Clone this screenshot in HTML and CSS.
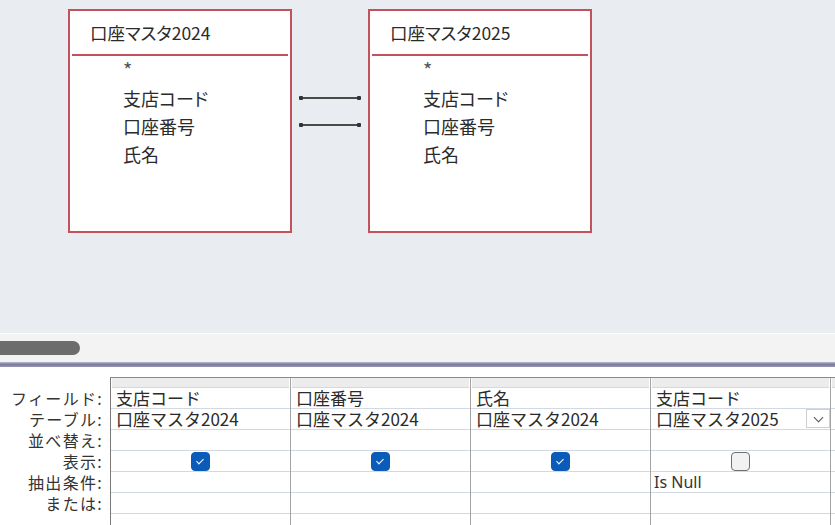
FILE: index.html
```html
<!DOCTYPE html>
<html lang="ja">
<head>
    <meta charset="UTF-8">
    <title>クエリデザイン</title>
    <link rel="stylesheet" href="styles.css">
</head>
<body>
    <div class="canvas">
        <div class="tbl">
            <div class="tbl-title">口座マスタ2024</div>
            <ul class="fields">
                <li class="star">*</li>
                <li>支店コード</li>
                <li>口座番号</li>
                <li>氏名</li>
            </ul>
        </div>
        <div class="links">
            <div class="link"></div>
            <div class="link"></div>
        </div>
        <div class="tbl">
            <div class="tbl-title">口座マスタ2025</div>
            <ul class="fields">
                <li class="star">*</li>
                <li>支店コード</li>
                <li>口座番号</li>
                <li>氏名</li>
            </ul>
        </div>
    </div>

    <div class="hscroll"><div class="thumb"></div></div>
    <div class="splitter"></div>

    <div class="qbe">
        <div class="labels">
            <div class="label">フィールド:</div>
            <div class="label">テーブル:</div>
            <div class="label">並べ替え:</div>
            <div class="label">表示:</div>
            <div class="label">抽出条件:</div>
            <div class="label">または:</div>
        </div>
        <div class="grid">
            <div class="qcol">
                <div class="qhead"></div>
                <div class="cell">支店コード</div>
                <div class="cell">口座マスタ2024</div>
                <div class="cell"></div>
                <div class="cell center"><span class="check on"></span></div>
                <div class="cell"></div>
                <div class="cell"></div>
                <div class="cell"></div>
            </div>
            <div class="qcol">
                <div class="qhead"></div>
                <div class="cell">口座番号</div>
                <div class="cell">口座マスタ2024</div>
                <div class="cell"></div>
                <div class="cell center"><span class="check on"></span></div>
                <div class="cell"></div>
                <div class="cell"></div>
                <div class="cell"></div>
            </div>
            <div class="qcol">
                <div class="qhead"></div>
                <div class="cell">氏名</div>
                <div class="cell">口座マスタ2024</div>
                <div class="cell"></div>
                <div class="cell center"><span class="check on"></span></div>
                <div class="cell"></div>
                <div class="cell"></div>
                <div class="cell"></div>
            </div>
            <div class="qcol">
                <div class="qhead"></div>
                <div class="cell">支店コード</div>
                <div class="cell combo">口座マスタ2025<span class="drop"></span></div>
                <div class="cell"></div>
                <div class="cell center"><span class="check"></span></div>
                <div class="cell latin">Is Null</div>
                <div class="cell"></div>
                <div class="cell"></div>
            </div>
            <div class="qcol">
                <div class="qhead"></div>
                <div class="cell"></div>
                <div class="cell"></div>
                <div class="cell"></div>
                <div class="cell"></div>
                <div class="cell"></div>
                <div class="cell"></div>
                <div class="cell"></div>
            </div>
        </div>
    </div>
</body>
</html>
```

FILE: styles.css
```css
body {
    margin: 0;
    width: 835px;
    height: 525px;
    overflow: hidden;
    background: #fff;
    color: #2b2b2b;
    font-family: "Noto Sans CJK JP", "Noto Sans", sans-serif;
}

/* table diagram area */
.canvas {
    display: flex;
    align-items: flex-start;
    height: 333px;
    box-sizing: border-box;
    padding: 9px 0 0 68px;
    background: #e9ecf0;
}

.tbl {
    width: 224px;
    height: 224px;
    box-sizing: border-box;
    border: 2px solid #c3525d;
    background: #fff;
}

.tbl-title {
    height: 43px;
    line-height: 43px;
    margin: 0 2px;
    padding-left: 18px;
    font-size: 17.5px;
    font-feature-settings: "palt";
    border-bottom: 2px solid #c3525d;
}

.fields {
    list-style: none;
    margin: 0;
    padding: 0 0 0 53px;
    font-size: 18px;
    line-height: 28px;
    font-feature-settings: "palt";
}

.fields .star {
    color: #555;
    font-size: 20px;
}

.links {
    width: 62px;
    margin: 88px 7px 0;
}

.link {
    position: relative;
    height: 2px;
    background: #4a4a4a;
    margin-bottom: 25px;
}

.link::before,
.link::after {
    content: "";
    position: absolute;
    top: -1px;
    width: 4px;
    height: 4px;
    border-radius: 1px;
    background: #333;
}

.link::before {
    left: 0;
}

.link::after {
    right: 0;
}

/* scroll + splitter */
.hscroll {
    height: 21px;
    padding-top: 7px;
    border-top: 1px solid #fff;
    background: #f3f3f3;
}

.thumb {
    width: 80px;
    height: 14px;
    border-radius: 0 7px 7px 0;
    background: #6c6c6c;
}

.splitter {
    height: 5px;
    background: linear-gradient(#b9b7d0, #7d7b9c 50%, #9896b3);
}

/* query grid */
.qbe {
    display: flex;
    padding-top: 10px;
}

.labels {
    width: 110px;
    box-sizing: border-box;
    padding: 11px 7px 0 0;
    text-align: right;
    color: #333;
}

.label {
    height: 20px;
    margin-bottom: 1px;
    line-height: 20px;
    font-size: 16px;
    letter-spacing: 1.3px;
}

.grid {
    display: flex;
    flex: 1;
    border-top: 1px solid #8a8a8a;
    border-left: 1px solid #7a7a7a;
    overflow: hidden;
}

.qcol {
    flex: 0 0 180px;
    box-sizing: border-box;
    border-right: 1px solid #a3a3a3;
}

.qhead {
    height: 9px;
    margin: 0 1px;
    background: #ececec;
    border-bottom: 1px solid #d3d9e4;
}

.cell {
    height: 20px;
    line-height: 20px;
    padding: 0 5px;
    border-bottom: 1px solid #d3d9e4;
    font-size: 17px;
    white-space: nowrap;
}

.cell.center {
    display: flex;
    justify-content: center;
    align-items: center;
}

.cell.combo {
    display: flex;
    justify-content: space-between;
    padding-right: 0;
}

.cell.latin {
    padding-left: 3px;
    font-family: "Noto Sans", sans-serif;
    font-size: 16px;
    color: #333;
}

.drop {
    position: relative;
    width: 24px;
    height: 19px;
    box-sizing: border-box;
    border: 1px solid #cfcfcf;
    background: #fff;
}

.drop::after {
    content: "";
    position: absolute;
    left: 8px;
    top: 4px;
    width: 6px;
    height: 6px;
    border-right: 1.5px solid #555;
    border-bottom: 1.5px solid #555;
    transform: rotate(45deg);
}

.check {
    position: relative;
    width: 19px;
    height: 19px;
    box-sizing: border-box;
    border-radius: 4px;
    border: 1.5px solid #6f6f6f;
    background: #f2f2f2;
}

.check.on {
    border-color: #0b5cb8;
    background: #0b5cb8;
}

.check.on::after {
    content: "";
    position: absolute;
    left: 6px;
    top: 4px;
    width: 3px;
    height: 6px;
    border-right: 1.5px solid #fff;
    border-bottom: 1.5px solid #fff;
    transform: rotate(45deg);
}
```
